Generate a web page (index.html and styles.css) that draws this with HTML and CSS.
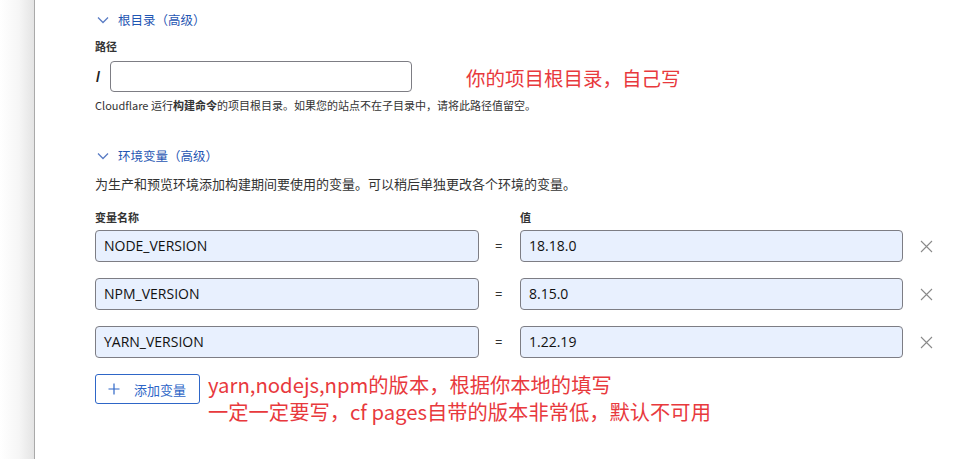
FILE: index.html
```html
<!DOCTYPE html>
<html lang="zh-CN">
<head>
<meta charset="utf-8">
<link rel="stylesheet" href="styles.css">
</head>
<body>
<div class="page">
  <div class="side"></div>
  <main class="main">
    <div class="toggle first">
      <svg class="chev" width="12" height="8" viewBox="0 0 12 8"><path d="M1 1.5 L6 6.5 L11 1.5" fill="none" stroke="#5a7cc4" stroke-width="1.3"/></svg>
      <span>根目录（高级）</span>
    </div>
    <div class="label">路径</div>
    <div class="path-row">
      <span class="slash">/</span>
      <div class="input plain"></div>
      <span class="note note-a">你的项目根目录，自己写</span>
    </div>
    <p class="help">Cloudflare 运行<b>构建命令</b>的项目根目录。如果您的站点不在子目录中，请将此路径值留空。</p>

    <div class="toggle second">
      <svg class="chev" width="12" height="8" viewBox="0 0 12 8"><path d="M1 1.5 L6 6.5 L11 1.5" fill="none" stroke="#5a7cc4" stroke-width="1.3"/></svg>
      <span>环境变量（高级）</span>
    </div>
    <p class="desc">为生产和预览环境添加构建期间要使用的变量。可以稍后单独更改各个环境的变量。</p>

    <div class="vars">
      <div class="label small">变量名称</div>
      <div></div>
      <div class="label small">值</div>
      <div></div>

      <div class="input fill">NODE_VERSION</div>
      <div class="eq">=</div>
      <div class="input fill">18.18.0</div>
      <div class="x"><svg width="13" height="13" viewBox="0 0 13 13"><path d="M1 1 L12 12 M12 1 L1 12" stroke="#8a8a8a" stroke-width="1.1"/></svg></div>

      <div class="input fill">NPM_VERSION</div>
      <div class="eq">=</div>
      <div class="input fill">8.15.0</div>
      <div class="x"><svg width="13" height="13" viewBox="0 0 13 13"><path d="M1 1 L12 12 M12 1 L1 12" stroke="#8a8a8a" stroke-width="1.1"/></svg></div>

      <div class="input fill">YARN_VERSION</div>
      <div class="eq">=</div>
      <div class="input fill">1.22.19</div>
      <div class="x"><svg width="13" height="13" viewBox="0 0 13 13"><path d="M1 1 L12 12 M12 1 L1 12" stroke="#8a8a8a" stroke-width="1.1"/></svg></div>
    </div>

    <div class="add-row">
      <button class="add"><svg class="plus" width="12" height="12" viewBox="0 0 12 12"><path d="M6 0.5 V11.5 M0.5 6 H11.5" stroke="#2e66c7" stroke-width="1.2"/></svg>添加变量</button>
      <div class="note note-b">yarn,nodejs,npm的版本，根据你本地的填写<br>一定一定要写，cf pages自带的版本非常低，默认不可用</div>
    </div>
  </main>
</div>
</body>
</html>
```

FILE: styles.css
```css
* { box-sizing: border-box; }
html, body { margin: 0; padding: 0; background: #fff; }
body {
  font-family: "Noto Sans CJK SC", "Noto Sans", sans-serif;
  color: #222;
  width: 971px;
  height: 459px;
  overflow: hidden;
}
.page { display: flex; height: 459px; }
.side {
  width: 35px;
  flex: none;
  background: linear-gradient(to right, #ffffff 0%, #f6f6f6 55%, #e4e4e4 100%);
  border-right: 1px solid #a9a9a9;
}
.main { flex: 1; padding-left: 60px; padding-top: 11px; }

.toggle {
  display: flex;
  align-items: center;
  height: 18px;
  color: #1f56b3;
  font-size: 12.5px;
  line-height: 18px;
}
.chev { margin-left: 2px; margin-right: 9px; }
.second { margin-top: 34px; }

.label {
  font-size: 11px;
  font-weight: 700;
  line-height: 16px;
  color: #333;
  margin-top: 9px;
}
.label.small { margin-top: 0; line-height: 14px; align-self: end; }

.path-row {
  display: flex;
  align-items: center;
  margin-top: 7px;
  height: 31px;
}
.slash {
  font-family: "Liberation Sans", sans-serif;
  font-weight: 700;
  font-size: 15px;
  width: 15px;
  padding-left: 1px;
  color: #222;
}
.input {
  border: 1px solid #7d7d84;
  border-radius: 4px;
  background: #fff;
}
.input.plain { width: 302px; height: 31px; }

.note {
  color: #e8393d;
  font-family: "Noto Sans CJK SC", sans-serif;
  font-size: 19.5px;
}
.note-a { margin-left: 54px; line-height: 24px; margin-top: 3px; }

.help {
  margin: 5px 0 0;
  font-size: 11px;
  line-height: 16px;
  color: #333;
}
.help b { font-weight: 700; }

.desc {
  margin: 10px 0 0;
  font-size: 13px;
  line-height: 18px;
  color: #333;
}

.vars {
  margin-top: 17px;
  display: grid;
  grid-template-columns: 384px 41px 383px 48px;
  grid-auto-rows: auto;
  row-gap: 6px;
}
.vars > .input { margin-bottom: 10px; }
.vars > .input:nth-last-child(-n+4) { margin-bottom: 0; }
.input.fill {
  height: 32px;
  background: #e8f0fe;
  font-family: "Open Sans", "Noto Sans", sans-serif;
  font-size: 14px;
  line-height: 30px;
  padding-left: 8px;
  color: #111;
}
.eq {
  font-family: "Open Sans", sans-serif;
  font-size: 13px;
  line-height: 32px;
  padding-left: 16px;
  color: #333;
}
.x {
  display: flex;
  align-items: center;
  padding-left: 17px;
  height: 32px;
}
.vars .eq, .vars .x { margin-bottom: 10px; }
.vars .eq:nth-last-child(-n+4), .vars .x:nth-last-child(-n+4) { margin-bottom: 0; }

.add-row {
  display: flex;
  align-items: flex-start;
  margin-top: 16px;
}
.add {
  width: 105px;
  height: 30px;
  border: 1px solid #2e66c7;
  border-radius: 3px;
  background: #fff;
  color: #2e66c7;
  font-family: "Noto Sans CJK SC", sans-serif;
  font-size: 13px;
  padding: 0 0 0 12px;
  display: flex;
  align-items: center;
  cursor: pointer;
}
.plus { margin-right: 14px; flex: none; }
.note-b {
  margin-left: 8px;
  line-height: 27px;
  margin-top: -3px;
  font-size: 20.3px;
  letter-spacing: 0;
}
```
